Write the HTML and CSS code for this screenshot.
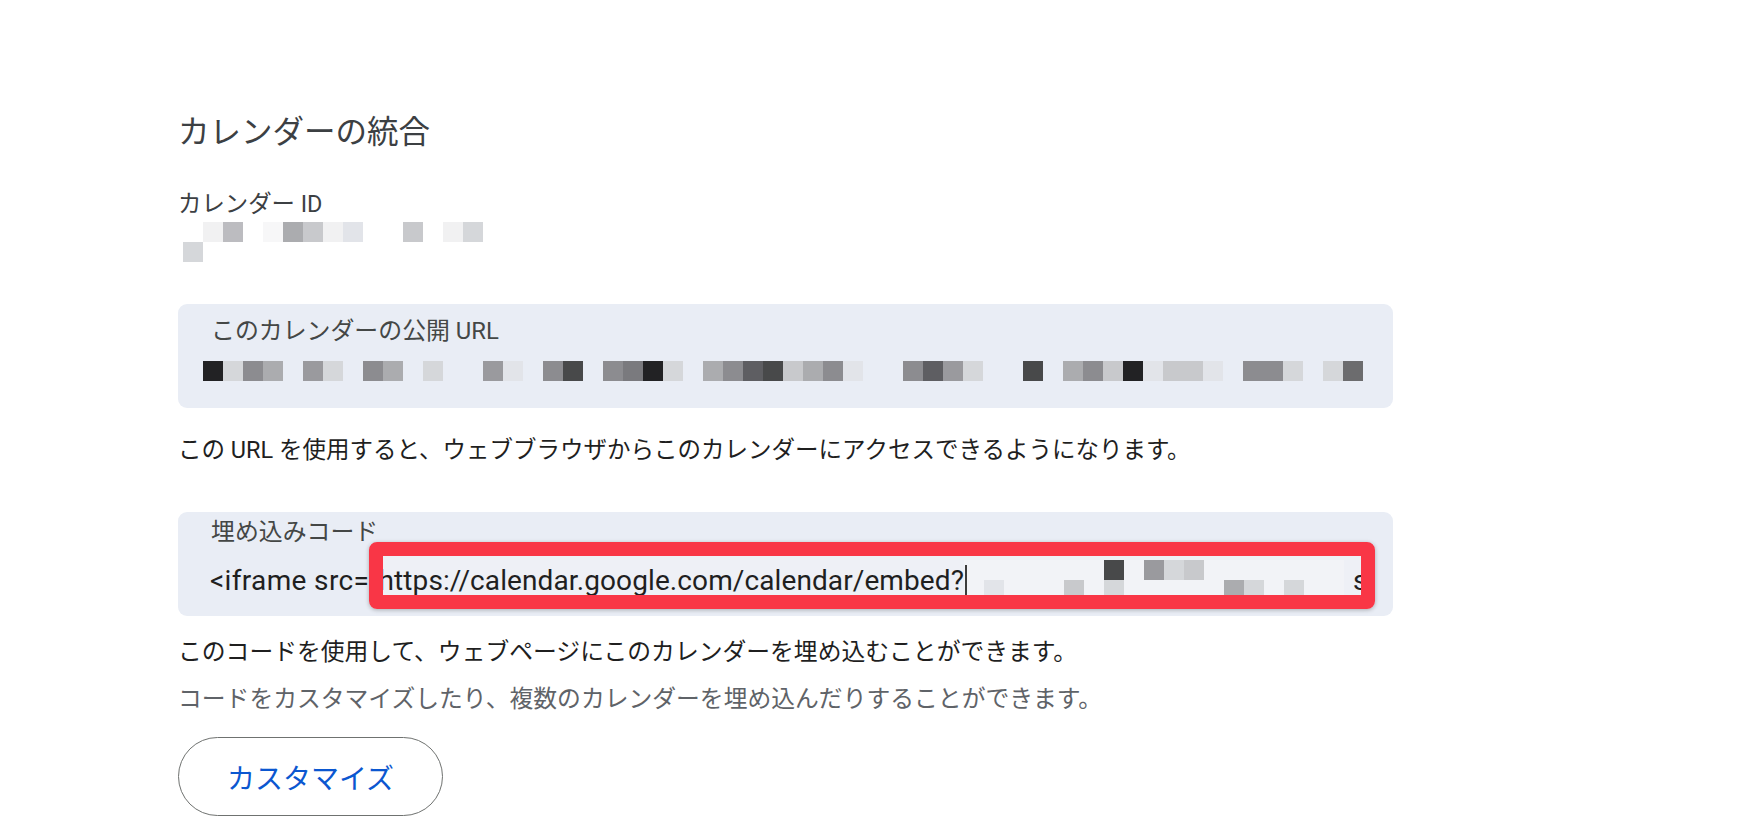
FILE: index.html
```html
<!DOCTYPE html>
<html lang="ja">
<head>
<meta charset="utf-8">
<title>カレンダーの統合</title>
<link rel="stylesheet" href="styles.css">
</head>
<body>
<main class="page">
  <h1 class="title">カレンダーの統合</h1>

  <section class="field">
    <div class="label">カレンダー ID</div>
    <div class="mosaic-row id-row">
      <i class="e"></i><i class="l4"></i><i class="m1"></i><i class="e"></i><i class="l5"></i><i class="g3"></i><i class="l1"></i><i class="l4"></i><i class="l3"></i><i class="e"></i><i class="e"></i><i class="l1"></i><i class="e"></i><i class="l4"></i><i class="l2"></i>
    </div>
    <div class="mosaic-row id-row">
      <i class="l2"></i>
    </div>
  </section>

  <section class="box url-box">
    <div class="box-label">このカレンダーの公開 URL</div>
    <div class="mosaic-row url-row">
      <i class="k"></i><i class="l2"></i><i class="g1"></i><i class="g3"></i><i class="e"></i><i class="g2"></i><i class="l2"></i><i class="e"></i><i class="g1"></i><i class="g3"></i><i class="e"></i><i class="l2"></i><i class="e"></i><i class="e"></i><i class="g2"></i><i class="l3"></i><i class="e"></i><i class="g1"></i><i class="d1"></i><i class="e"></i><i class="g1"></i><i class="g0"></i><i class="k"></i><i class="l2"></i><i class="e"></i><i class="g3"></i><i class="g1"></i><i class="d2"></i><i class="d1"></i><i class="l1"></i><i class="g3"></i><i class="g1"></i><i class="l3"></i><i class="e"></i><i class="e"></i><i class="g1"></i><i class="d2"></i><i class="g2"></i><i class="l2"></i><i class="e"></i><i class="e"></i><i class="d1"></i><i class="e"></i><i class="g3"></i><i class="g1"></i><i class="l1"></i><i class="k"></i><i class="l3"></i><i class="l1"></i><i class="l1"></i><i class="l3"></i><i class="e"></i><i class="g1"></i><i class="g1"></i><i class="l2"></i><i class="e"></i><i class="l2"></i><i class="d3"></i>
    </div>
  </section>
  <p class="desc first">この URL を使用すると、ウェブブラウザからこのカレンダーにアクセスできるようになります。</p>

  <section class="box embed-box">
    <div class="highlight"></div>
    <div class="box-label">埋め込みコード</div>
    <div class="code-line">
      <span class="code-text tag">&lt;iframe src="</span><span class="code-text url">https://calendar.google.com/calendar/embed?</span><span class="cursor"></span>
      <div class="code-mosaic">
        <i class="e"></i><i class="e"></i><i class="e"></i><i class="e"></i><i class="e"></i><i class="e"></i><i class="e"></i><i class="d1"></i><i class="e"></i><i class="g2"></i><i class="l2"></i><i class="l1"></i><i class="e"></i><i class="e"></i><i class="e"></i><i class="e"></i><i class="e"></i><i class="e"></i><i class="e"></i>
        <i class="e"></i><i class="l3"></i><i class="e"></i><i class="e"></i><i class="e"></i><i class="l1"></i><i class="e"></i><i class="l2"></i><i class="e"></i><i class="e"></i><i class="e"></i><i class="e"></i><i class="e"></i><i class="g3"></i><i class="l2"></i><i class="e"></i><i class="l2"></i><i class="e"></i><i class="e"></i>
      </div>
      <span class="code-text tail">s</span>
    </div>
    <div class="frame"></div>
  </section>
  <p class="desc code-desc">このコードを使用して、ウェブページにこのカレンダーを埋め込むことができます。</p>
  <p class="desc sub">コードをカスタマイズしたり、複数のカレンダーを埋め込んだりすることができます。</p>

  <button class="btn" type="button">カスタマイズ</button>
</main>
</body>
</html>
```

FILE: styles.css
```css
* { box-sizing: border-box; }

html, body {
  margin: 0;
  padding: 0;
  background: #ffffff;
}

body {
  font-family: Roboto, "Noto Sans CJK JP", "Noto Sans", sans-serif;
  color: #1f1f1f;
  width: 1748px;
  height: 840px;
  overflow: hidden;
}

.page {
  padding: 113px 0 0 178px;
  width: 1393px;
}

.title {
  margin: 0;
  font-size: 31.5px;
  line-height: 40px;
  font-weight: 400;
  color: #3c4043;
}

.field {
  margin-top: 35px;
}

.label {
  font-size: 23.4px;
  line-height: 32px;
  color: #3c4043;
}

.mosaic-row {
  display: flex;
  height: 20px;
}

.mosaic-row i,
.code-mosaic i {
  display: block;
  width: 20px;
  height: 20px;
  flex: none;
}

.id-row {
  margin-left: 5px;
}

.field .label + .id-row {
  margin-top: 2px;
}

.box {
  background: #e9edf5;
  border-radius: 9px;
  width: 1215px;
}

.url-box {
  margin-top: 42px;
  height: 104px;
  padding: 11px 0 0 33px;
}

.box-label {
  font-size: 23.9px;
  line-height: 32px;
  color: #444746;
}

.url-row {
  margin-top: 14px;
  margin-left: -8px;
}

.desc {
  margin: 0;
  font-size: 23.8px;
  line-height: 32px;
  color: #1f1f1f;
}

.desc.first {
  margin-top: 26px;
  font-size: 23.5px;
}

.embed-box {
  position: relative;
  margin-top: 46px;
  height: 104px;
  padding: 4px 0 0 33px;
  overflow: hidden;
}

.code-line {
  position: relative;
  z-index: 1;
  display: flex;
  align-items: center;
  height: 36px;
  margin-top: 14px;
  margin-left: -1px;
  white-space: nowrap;
}

.code-text {
  font-family: Roboto, "Liberation Sans", sans-serif;
  font-size: 28px;
  color: #1f1f1f;
  flex: none;
}

.code-text.tag {
  letter-spacing: 0.35px;
}

.code-text.url {
  letter-spacing: 0.1px;
}

.code-text.tail {
  margin-left: 9px;
}

.cursor {
  position: relative;
  z-index: 1;
  display: block;
  flex: none;
  width: 2px;
  height: 30px;
  margin-left: 1px;
  background: #3c3c3c;
}

.code-mosaic {
  align-self: flex-start;
  margin-top: -2px;
  margin-left: -3px;
  display: grid;
  grid-template-columns: repeat(19, 20px);
  grid-template-rows: 20px 20px;
  background: #f2f3f7;
  flex: none;
}

.highlight {
  position: absolute;
  left: 205px;
  top: 43px;
  width: 979px;
  height: 41px;
  background: #eef0f6;
  border-top: 1px solid #d3d6dd;
  z-index: 0;
}

.frame {
  position: absolute;
  left: 191px;
  top: 30px;
  width: 1006px;
  height: 67px;
  border: 14px solid #f93646;
  border-radius: 8px;
  box-shadow: 0 1px 4px rgba(0, 0, 0, 0.28);
  z-index: 2;
}

.desc.code-desc {
  margin-top: 20px;
}

.desc.sub {
  margin-top: 15px;
  color: #5f6368;
}

.btn {
  display: flex;
  align-items: center;
  justify-content: center;
  margin-top: 22px;
  width: 265px;
  height: 79px;
  border: 1.5px solid #6f7270;
  border-radius: 40px;
  background: #ffffff;
  color: #0b57d0;
  font-family: Roboto, "Noto Sans CJK JP", sans-serif;
  font-size: 28px;
  padding: 0;
}

/* mosaic shades */
.e  { background: transparent; }
.k  { background: #222224; }
.d1 { background: #48494a; }
.d2 { background: #5e5e62; }
.d3 { background: #6c6c6e; }
.g0 { background: #7a7a7e; }
.g1 { background: #8c8c90; }
.g2 { background: #9a9a9e; }
.g3 { background: #abacaf; }
.m1 { background: #bcbcc0; }
.l1 { background: #c8c9cc; }
.l2 { background: #d5d7da; }
.l3 { background: #e2e4e9; }
.l4 { background: #f1f1f2; }
.l5 { background: #f7f7f8; }
```
